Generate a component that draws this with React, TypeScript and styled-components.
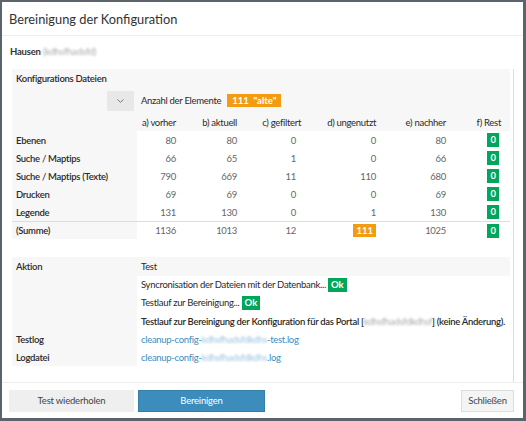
import styled, { createGlobalStyle } from 'styled-components';

const GlobalStyle = createGlobalStyle`
  html, body {
    margin: 0;
    padding: 0;
  }
  body {
    background: #5b636c;
    font-family: Lato, "Liberation Sans", sans-serif;
    color: #333;
  }
`;

interface Row {
  label: string,
  values: number[],
}

const rows: Row[] = [
  { label: 'Ebenen', values: [80, 80, 0, 0, 80] },
  { label: 'Suche / Maptips', values: [66, 65, 1, 0, 66] },
  { label: 'Suche / Maptips (Texte)', values: [790, 669, 11, 110, 680] },
  { label: 'Drucken', values: [69, 69, 0, 0, 69] },
  { label: 'Legende', values: [131, 130, 0, 1, 130] },
];

const headers = ['a) vorher', 'b) aktuell', 'c) gefiltert', 'd) ungenutzt', 'e) nachher', 'f) Rest'];
const colWidths = [125, 45, 61, 64, 75, 70];

const ChevronDown = () => (
  <svg width="7" height="4" viewBox="0 0 7 4">
    <path d="M0.5 0.5 L3.5 3.3 L6.5 0.5" fill="none" stroke="#777" strokeWidth="1" />
  </svg>
);

const App = () => {
  return (
    <>
      <GlobalStyle />
      <Backdrop>
        <Dialog>
          <Header>Bereinigung der Konfiguration</Header>
          <Body>
            <PortalLine>
              <strong>Hausen</strong> <Blur>(kdhsfhadsfd)</Blur>
            </PortalLine>
            <ScrollArea>
              <Table>
                <colgroup>
                  {colWidths.map((w, i) => <col key={i} style={{ width: w }} />)}
                  <col />
                </colgroup>
                <tbody>
                  <tr>
                    <Th colSpan={7} $height={19}>Konfigurations Dateien</Th>
                  </tr>
                  <tr>
                    <Th $height={25} $align="right">
                      <DropButton><ChevronDown /></DropButton>
                    </Th>
                    <Th colSpan={6} $normal>
                      Anzahl der Elemente <OrangeBadge $wide>111&nbsp;&nbsp;"alte"</OrangeBadge>
                    </Th>
                  </tr>
                  <tr>
                    <Th $height={18} />
                    {headers.map((h, i) => (
                      <Th key={h} $normal $align="right" $pad={i === 5 ? 9 : 6}>{h}</Th>
                    ))}
                  </tr>
                  {rows.map((r) => (
                    <tr key={r.label}>
                      <Th $height={18}>{r.label}</Th>
                      {r.values.map((v, i) => (
                        <Td key={i} $pad={i === 2 ? 11 : 6}>{v}</Td>
                      ))}
                      <Td $pad={11}><GreenBadge>0</GreenBadge></Td>
                    </tr>
                  ))}
                  <SumRow>
                    <Th $height={17}>(Summe)</Th>
                    <Td>1136</Td>
                    <Td>1013</Td>
                    <Td $pad={11}>12</Td>
                    <Td><OrangeBadge>111</OrangeBadge></Td>
                    <Td>1025</Td>
                    <Td $pad={11}><GreenBadge>0</GreenBadge></Td>
                  </SumRow>
                </tbody>
              </Table>

              <Table>
                <colgroup>
                  <col style={{ width: 125 }} />
                  <col />
                </colgroup>
                <tbody>
                  <tr>
                    <Th $height={19}>Aktion</Th>
                    <Th $normal>Test</Th>
                  </tr>
                  <tr>
                    <Th $height={18} />
                    <TextCell>Syncronisation der Dateien mit der Datenbank... <GreenBadge>Ok</GreenBadge></TextCell>
                  </tr>
                  <tr>
                    <Th $height={18} />
                    <TextCell>Testlauf zur Bereinigung... <GreenBadge>Ok</GreenBadge></TextCell>
                  </tr>
                  <tr>
                    <Th $height={18} />
                    <TextCell $bold>
                      Testlauf zur Bereinigung der Konfiguration für das Portal [<Blur>kdhsfhadsfdkdhsf</Blur>] (keine Änderung).
                    </TextCell>
                  </tr>
                  <tr>
                    <Th $height={18}>Testlog</Th>
                    <TextCell>
                      <LogLink href="#">cleanup-config-<Blur $link>kdhsfhadsfdkdhs</Blur>-test.log</LogLink>
                    </TextCell>
                  </tr>
                  <tr>
                    <Th $height={18}>Logdatei</Th>
                    <TextCell>
                      <LogLink href="#">cleanup-config-<Blur $link>kdhsfhadsfdkdhs</Blur>.log</LogLink>
                    </TextCell>
                  </tr>
                </tbody>
              </Table>
            </ScrollArea>
          </Body>
          <Footer>
            <Button $width={125} $flat>Test wiederholen</Button>
            <Button $width={127} $primary>Bereinigen</Button>
            <Spacer />
            <Button $width={53}>Schließen</Button>
          </Footer>
        </Dialog>
      </Backdrop>
    </>
  );
};

const Backdrop = styled.div`
  width: 526px;
  height: 421px;
  box-sizing: border-box;
  padding: 2px 3px 3px 2px;
`;

const Dialog = styled.div`
  height: 100%;
  background: #fff;
  display: flex;
  flex-direction: column;
`;

const Header = styled.div`
  height: 33px;
  flex: none;
  display: flex;
  align-items: center;
  padding: 0 7px;
  font-size: 12.8px;
  color: #333;
  border-bottom: 1px solid #eee;
`;

const Body = styled.div`
  flex: 1;
  min-height: 0;
  display: flex;
  flex-direction: column;
  padding: 8px 9px 0 8px;
`;

const PortalLine = styled.div`
  height: 16px;
  line-height: 16px;
  font-size: 9.5px;
  letter-spacing: -0.2px;
  margin-bottom: 9px;

  strong {
    font-weight: 700;
  }
`;

const Blur = styled.span<{ $link?: boolean }>`
  color: ${(p) => (p.$link ? '#9cc3dc' : '#aaa')};
  filter: blur(1.2px);
  font-weight: 400;
`;

const ScrollArea = styled.div`
  flex: 1;
  border-right: 1px solid #ddd;
  padding: 0 2px;
  display: flex;
  flex-direction: column;
  gap: 18px;
`;

const Table = styled.table`
  width: 498px;
  border-collapse: collapse;
  table-layout: fixed;
  font-size: 9.5px;
  letter-spacing: -0.3px;
`;

const Th = styled.th<{ $height?: number, $align?: string, $normal?: boolean, $pad?: number }>`
  background: #f7f7f7;
  height: ${(p) => (p.$height ? `${p.$height}px` : 'auto')};
  padding: 0 ${(p) => p.$pad ?? 6}px 0 4px;
  text-align: ${(p) => p.$align || 'left'};
  font-weight: ${(p) => (p.$normal ? 400 : 600)};
  color: #2a2a2a;
  white-space: nowrap;
  vertical-align: middle;
`;

const Td = styled.td<{ $pad?: number }>`
  background: #fff;
  padding: 0 ${(p) => p.$pad ?? 6}px 0 4px;
  text-align: right;
  color: #666;
  vertical-align: middle;
`;

const TextCell = styled.td<{ $bold?: boolean }>`
  background: #fff;
  padding: 0 4px;
  color: #2a2a2a;
  font-weight: ${(p) => (p.$bold ? 600 : 400)};
  white-space: nowrap;
  vertical-align: middle;
`;

const SumRow = styled.tr`
  border-top: 1px solid #ddd;
`;

const DropButton = styled.span`
  display: inline-flex;
  align-items: center;
  justify-content: center;
  width: 27px;
  height: 20px;
  background: #e8e8e8;
  margin-right: -3px;
  vertical-align: middle;
`;

const OrangeBadge = styled.span<{ $wide?: boolean }>`
  display: inline-block;
  background: #f39c12;
  color: #fff;
  font-weight: 700;
  letter-spacing: 0;
  line-height: 13px;
  padding: ${(p) => (p.$wide ? '0 5px' : '0 3px')};
  margin-left: ${(p) => (p.$wide ? '4px' : '0')};
`;

const GreenBadge = styled.span`
  display: inline-block;
  background: #00a65a;
  color: #fff;
  font-weight: 700;
  letter-spacing: 0;
  line-height: 14px;
  padding: 0 3px;
`;

const LogLink = styled.a`
  color: #3c8dbc;
  text-decoration: none;
`;

const Footer = styled.div`
  flex: none;
  display: flex;
  align-items: center;
  gap: 4px;
  height: 35px;
  padding: 0 9px 0 7px;
  border-top: 1px solid #eee;
`;

const Spacer = styled.div`
  flex: 1;
`;

const Button = styled.button<{ $width: number, $primary?: boolean, $flat?: boolean }>`
  width: ${(p) => p.$width}px;
  height: 22px;
  padding: 0;
  font-family: Lato, "Liberation Sans", sans-serif;
  font-size: 9.5px;
  letter-spacing: -0.2px;
  border: 1px solid ${(p) => (p.$primary ? '#367fa9' : p.$flat ? '#efefef' : '#ddd')};
  background: ${(p) => (p.$primary ? '#3c8dbc' : p.$flat ? '#efefef' : '#f4f4f4')};
  color: ${(p) => (p.$primary ? '#fff' : '#444')};
  border-radius: 0;
`;

export default App;
